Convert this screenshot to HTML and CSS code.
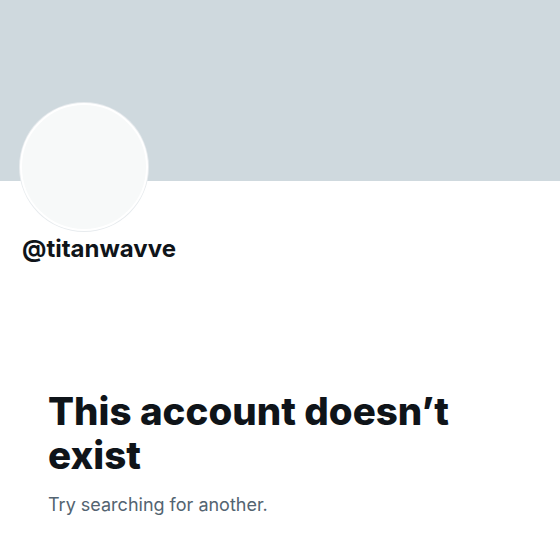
FILE: index.html
```html
<!DOCTYPE html>
<html>
<head>
<meta charset="utf-8">
<link rel="stylesheet" href="styles.css">
</head>
<body>
<div class="page">
  <div class="banner"></div>
  <div class="profile">
    <div class="avatar"></div>
    <div class="handle">@titanwavve</div>
  </div>
  <div class="empty">
    <h1 class="title">This account doesn’t exist</h1>
    <p class="sub">Try searching for another.</p>
  </div>
</div>
</body>
</html>
```
FILE: styles.css
```css
html, body {
  margin: 0;
  padding: 0;
  background: #ffffff;
}
.page {
  width: 560px;
  height: 536px;
  overflow: hidden;
  font-family: "Inter", "Liberation Sans", Arial, sans-serif;
  color: #0f1419;
}
.banner {
  height: 181px;
  background: #cfd9de;
}
.profile {
  padding: 0 20px;
}
.avatar {
  width: 124px;
  height: 124px;
  margin-top: -78px;
  border-radius: 50%;
  background: #f7f9f9;
  border: 2px solid #ffffff;
  box-shadow: 0 0 0 1px #e7ebee;
}
.handle {
  margin-top: 4px;
  padding-left: 2px;
  font-size: 24px;
  font-weight: 700;
  line-height: 28px;
}
.empty {
  padding: 0 48px;
  margin-top: 126px;
}
.title {
  margin: 0;
  font-size: 38.5px;
  font-weight: 800;
  line-height: 44px;
  letter-spacing: 0;
}
.sub {
  margin: 16px 0 0;
  font-size: 18px;
  line-height: 24px;
  color: #536471;
}
```
